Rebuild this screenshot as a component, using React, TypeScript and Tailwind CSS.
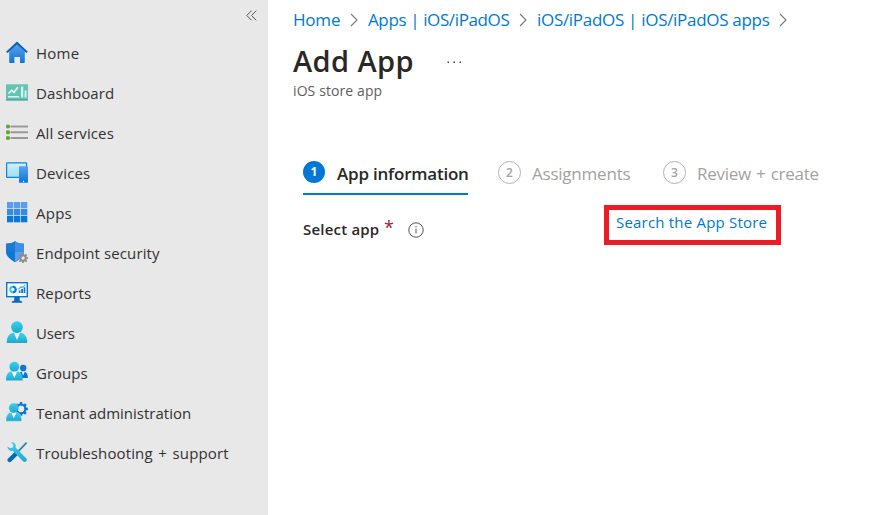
import React from 'react';

type IconProps = { children: React.ReactNode };

function Icon({ children }: IconProps) {
  return (
    <svg width="22" height="22" viewBox="0 0 22 22" className="shrink-0">
      {children}
    </svg>
  );
}

const gear = (cx: number, cy: number, r: number, color: string, hole: number) => (
  <g fill="none" stroke={color}>
    <circle cx={cx} cy={cy} r={(r + hole) / 2 - 0.2} strokeWidth={r - hole - 0.6} />
    {[0, 45, 90, 135, 180, 225, 270, 315].map((a) => (
      <path
        key={a}
        d={`M${cx} ${cy - hole - 0.4}V${cy - r - 0.9}`}
        strokeWidth={r * 0.42}
        transform={`rotate(${a} ${cx} ${cy})`}
      />
    ))}
  </g>
);

const icons = {
  home: (
    <Icon>
      <path d="M3.2 10.5 11 3l7.800 7.500V21.100a.9.9 0 0 1-.9.9H14v-6H8.400v6H4.100a.9.9 0 0 1-.9-.9Z" fill="url(#blueV)" />
      <path d="M11 .4.1 10.800l1.500 1.300L11 3.400l9.400 8.700 1.500-1.300Z" fill="#0b62b5" />
    </Icon>
  ),
  dashboard: (
    <Icon>
      <path d="M0 3.300h22v16.200H0z" fill="#64c4b4" />
      <path d="M0 18h22v1.500H0z" fill="#52aa9f" />
      <path d="m2.500 12.500 3.200-3.200 2.400 2 3.700-5" fill="none" stroke="#f4fffd" strokeWidth="1.500" />
      <path d="M2 15h11v1.600H2zM15 5.500h2.200v11.100H15zM18.600 9.500h2v7.100h-2z" fill="#d8f3ee" />
    </Icon>
  ),
  services: (
    <Icon>
      <path d="M4.500 5.500h17.500M4.500 11.300h17.500M4.500 17h17.500" stroke="#999" strokeWidth="1.900" />
      <g fill="#62a828">
        <circle cx="2" cy="5.500" r="2.100" />
        <circle cx="2" cy="11.300" r="2.100" />
        <circle cx="2" cy="17" r="2.100" />
      </g>
    </Icon>
  ),
  devices: (
    <Icon>
      <rect x=".6" y="1.800" width="20" height="14.600" rx=".6" fill="url(#screen)" stroke="#1382df" strokeWidth="1.200" />
      <rect x="13" y="5.300" width="9" height="16.500" rx=".6" fill="url(#blueV)" />
      <circle cx="17.500" cy="20.500" r=".7" fill="#fff" />
    </Icon>
  ),
  apps: (
    <Icon>
      {[0, 1, 2].map((r) =>
        [0, 1, 2].map((c) => (
          <rect key={`${r}${c}`} x={1 + c * 7} y={1 + r * 7} width="6.300" height="6.300" fill={['#5b9cf0', '#348ae6', '#0b78d8'][r]} />
        )),
      )}
    </Icon>
  ),
  security: (
    <Icon>
      <path d="M9 .3c2.800 2 5.600 2.400 9 2.400V10.500c0 5-4.200 7.600-9 10.800C4.200 18.100 0 15.500 0 10.500V2.700C3.400 2.700 6.200 2.300 9 .3Z" fill="#0b78d4" />
      <path d="M9 .3c2.800 2 5.600 2.400 9 2.400V10.800H9Z" fill="#3f8fe8" />
      <path d="M9 10.800h9C17.500 15.500 13.600 18.300 9 21.300Z" fill="#5ea0ef" />
      <path d="M9 .3v10.500H0V2.700C3.400 2.700 6.200 2.300 9 .3Z" fill="#1a7bd6" />
      {gear(17, 17, 4.200, '#8d8d8d', 1.700)}
    </Icon>
  ),
  reports: (
    <Icon>
      <path d="M8.300 15h5.400v4.500l2.500 1v1.200H5.800v-1.200l2.500-1Z" fill="#0b68bb" />
      <rect x=".7" y="1.700" width="20.600" height="14" fill="#f8fdff" stroke="#0d74ce" strokeWidth="1.400" />
      <circle cx="7" cy="8.500" r="2.700" fill="none" stroke="#35c6ea" strokeWidth="1.900" />
      <path d="M7 5.800a2.700 2.700 0 0 1 0 5.400" fill="none" stroke="#0b78d0" strokeWidth="1.900" />
      <path d="M12.800 9.500h1.700V12h-1.700zM15.200 8H17v4h-1.800zM17.600 6.200h1.700V12h-1.700z" fill="#0b78d0" />
      <path d="m12.300 8.300 3-2.500 1.200.8L19.300 3.800" fill="none" stroke="#48bde5" strokeWidth="1.200" />
    </Icon>
  ),
  users: (
    <Icon>
      <path d="M.8 22v-2.300C1.600 14 5 11.700 8 11.700h6c3 0 6.400 2.300 7.200 8V22Z" fill="url(#cyanV)" />
      <path d="m7.800 11.700 3.200 7.300 3.200-7.300Z" fill="#e9f9fc" />
      <circle cx="11" cy="6.100" r="5.900" fill="url(#cyanV)" />
    </Icon>
  ),
  groups: (
    <Icon>
      <path d="M12 17v-2.700c.6-2.400 2.200-3.600 4-3.600h2.500c2 0 3.300 2.300 3.500 6.300Z" fill="#0878d3" />
      <path d="m15.700 10.700 1.500 3.800 1.600-3.800Z" fill="#fff" />
      <circle cx="17.200" cy="7" r="3.200" fill="#0878d3" />
      <path d="M0 19.600v-2.400c.6-4.500 3-6.600 5.600-6.600h5.500c2.700 0 5 2.100 5.500 6.600v2.400Z" fill="url(#cyanV)" />
      <path d="m5.500 10.600 2.800 6.400 2.800-6.400Z" fill="#fff" />
      <circle cx="8.300" cy="5.700" r="4.900" fill="url(#cyanV)" />
    </Icon>
  ),
  tenant: (
    <Icon>
      {gear(15, 7.900, 6, '#0878d3', 3.200)}
      <path d="M0 20.200v-2.200c.6-4.600 2.800-6.500 5.300-6.500h5.200c2.500 0 4.500 1.900 5.100 6.500v2.200Z" fill="url(#cyanV)" stroke="#e8e8e8" strokeWidth=".4" />
      <path d="m5.200 11.500 2.600 5.800 2.600-5.800Z" fill="#fff" />
      <circle cx="7.800" cy="7" r="4.800" fill="url(#cyanV)" />
    </Icon>
  ),
  tools: (
    <Icon>
      <path d="m20.600 1.600-9.500 10" stroke="#2387a8" strokeWidth="1.700" />
      <path d="m10.300 12.500-6.600 6.500" stroke="#0868b8" strokeWidth="4.400" strokeLinecap="round" />
      <path d="M5 1.300c2.400-.6 4.800 1 4.800 3.600l-.2 1.700L20.400 17.500c1.600 2-1 4.700-3.100 3.100L6.700 9.800C3.600 10.500 1.200 8.200 1.400 5.200L4 7.300l2.800-.8.600-2.700Z" fill="url(#cyanV)" />
    </Icon>
  ),
};

const nav = [
  { label: 'Home', icon: icons.home, text: 'tracking-[0.25px]' },
  { label: 'Dashboard', icon: icons.dashboard, text: 'tracking-[0.1px]' },
  { label: 'All services', icon: icons.services, text: 'tracking-[0.1px]' },
  { label: 'Devices', icon: icons.devices, text: 'tracking-[0.15px]' },
  { label: 'Apps', icon: icons.apps, text: 'tracking-[0.25px]' },
  { label: 'Endpoint security', icon: icons.security, text: 'tracking-[0.1px]' },
  { label: 'Reports', icon: icons.reports, text: 'tracking-[0.1px]' },
  { label: 'Users', icon: icons.users, text: 'tracking-[-0.2px]' },
  { label: 'Groups', icon: icons.groups, text: 'tracking-[0px]' },
  { label: 'Tenant administration', icon: icons.tenant, text: 'tracking-[0px]' },
  { label: 'Troubleshooting + support', icon: icons.tools, text: 'tracking-[0.12px] [word-spacing:1.6px]' },
];

function Chevron() {
  return (
    <svg width="8" height="14" viewBox="0 0 8 14" fill="none" stroke="#777" strokeWidth="1.100" className="shrink-0">
      <path d="m1 1 6 6-6 6" />
    </svg>
  );
}

function Sidebar() {
  return (
    <aside className="w-[268px] shrink-0 bg-[#e8e8e8]">
      <div className="flex h-[33px] justify-end pt-[10px] pr-[11px]">
        <svg width="11" height="11" viewBox="0 0 11 11" fill="none" stroke="#555">
          <path d="M5.500.700.800 5.500l4.700 4.800M10.200.700 5.500 5.500l4.700 4.800" />
        </svg>
      </div>
      <nav>
        {nav.map((item) => (
          <a key={item.label} className="flex h-10 items-center gap-2 pl-1.5">
            <span className="-mt-0.5">{item.icon}</span>
            <span className={`whitespace-nowrap text-[15px] leading-5 text-[#323130] ${item.text}`}>{item.label}</span>
          </a>
        ))}
      </nav>
    </aside>
  );
}

export default function App() {
  return (
    <div className="flex h-[515px] w-[870px] overflow-hidden bg-white font-['Open_Sans',sans-serif] text-[#292827]">
      <svg width="0" height="0" className="absolute">
        <defs>
          <linearGradient id="blueV" x1="0" y1="0" x2="0" y2="1">
            <stop stopColor="#5ea0ef" />
            <stop offset="1" stopColor="#0878d4" />
          </linearGradient>
          <linearGradient id="cyanV" x1="0" y1="0" x2="0" y2="1">
            <stop stopColor="#36d1ee" />
            <stop offset="1" stopColor="#22a7cc" />
          </linearGradient>
          <linearGradient id="screen" x1="0" y1="0" x2="0" y2="1">
            <stop stopColor="#d0f1ff" />
            <stop offset="1" stopColor="#9fdcfa" />
          </linearGradient>
        </defs>
      </svg>
      <Sidebar />
      <main className="flex-1 whitespace-nowrap">
        <div className="flex h-[40px] items-center pl-[25px] text-[17px] text-[#0078d4]">
          <a className="w-[57px] tracking-[-0.2px]">Home</a>
          <Chevron />
          <a className="ml-[10px] w-[151px] tracking-[-0.38px]">Apps | iOS/iPadOS</a>
          <Chevron />
          <a className="ml-[10px] w-[234px] tracking-[-0.3px]">iOS/iPadOS | iOS/iPadOS apps</a>
          <span className="ml-[8px] flex">
            <Chevron />
          </span>
        </div>
        <header className="pl-[25px]">
          <div className="flex h-[41px] items-center">
            <h1 className="w-[154px] pt-px text-[29px] leading-[40px] font-semibold tracking-[0.4px]">Add App</h1>
            <svg width="15" height="3" viewBox="0 0 15 3" fill="#444" className="mt-[4px]">
              <path d="M.500.500h1.500V2H.500zM6.500.500H8V2H6.500zM12.500.500H14V2h-1.500z" />
            </svg>
          </div>
          <p className="h-5 text-[14px] leading-5 tracking-[0.1px] text-[#605e5c]">iOS store app</p>
        </header>
        <div className="mt-[58px] flex h-[36px] pl-[35px] text-[17px]">
          <div className="flex h-[36px] w-[165px] border-b-2 border-[#0078d4]">
            <span className="mt-[2px] flex size-[22px] shrink-0 items-center justify-center rounded-full bg-[#0078d4] text-[12px] font-bold text-white">1</span>
            <span className="ml-3 leading-[29px] font-semibold tracking-[-0.22px]">App information</span>
          </div>
          <div className="ml-[30px] flex w-[165px] text-[#a3a2a0]">
            <span className="mt-[2px] flex size-[23px] shrink-0 items-center justify-center rounded-full border border-[#b3b2b0] text-[12px] font-semibold">2</span>
            <span className="ml-[11px] leading-[29px] tracking-[-0.22px]">Assignments</span>
          </div>
          <div className="flex text-[#a3a2a0]">
            <span className="mt-[2px] flex size-[23px] shrink-0 items-center justify-center rounded-full border border-[#b3b2b0] text-[12px] font-semibold">3</span>
            <span className="ml-[11px] leading-[29px] tracking-[-0.27px] [word-spacing:1px]">Review + create</span>
          </div>
        </div>
        <div className="mt-[10px] flex pl-[35px]">
          <div className="flex w-[301px] pt-[14px] text-[15px] leading-5">
            <span className="w-[81px] font-semibold tracking-[0.2px]">Select app</span>
            <span className="-mt-[2px] w-[9px] text-[18px] text-[#a4262c]">*</span>
            <svg width="16" height="16" viewBox="0 0 16 16" fill="none" stroke="#555" className="mt-[3px] ml-[15px]">
              <circle cx="8" cy="8" r="7.200" />
              <path d="M8 6.500v5M8 4v1.300" />
            </svg>
          </div>
          <div className="flex h-[40px] w-[177px] border-[5px] border-[#ed1c24] pl-[7px] text-[15px] leading-[25px] tracking-[0.2px] text-[#0078d4]">
            <a>Search the App Store</a>
          </div>
        </div>
      </main>
    </div>
  );
}
